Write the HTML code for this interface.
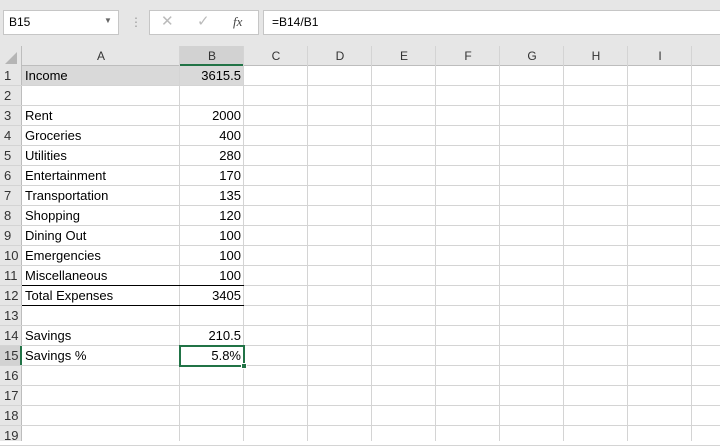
<!DOCTYPE html><html><head><style>
body{margin:0;width:720px;height:441px;overflow:hidden;background:#fff;font-family:"Liberation Sans",sans-serif;font-size:13px;color:#000;position:relative}
.a{position:absolute;box-sizing:border-box}
.t{position:absolute;line-height:20px;white-space:nowrap}
</style></head><body>
<div class="a" style="left:0;top:0;width:720px;height:46px;background:#e6e6e6"></div>
<div class="a" style="left:3px;top:10px;width:116px;height:25px;background:#fff;border:1px solid #c6c6c6"></div>
<div class="t" style="left:9px;top:12px;font-size:12px">B15</div>
<div class="t" style="left:104px;top:11px;font-size:8px;color:#666">▼</div>
<div class="t" style="left:130px;top:12px;color:#999;font-size:12px">⋮</div>
<div class="a" style="left:149px;top:10px;width:110px;height:25px;background:#fff;border:1px solid #c6c6c6"></div>
<div class="t" style="left:161px;top:12px;color:#bbb;font-size:15px">✕</div>
<div class="t" style="left:197px;top:12px;color:#bbb;font-size:15px">✓</div>
<div class="t" style="left:233px;top:12px;font-family:'Liberation Serif',serif;font-style:italic;color:#444">fx</div>
<div class="a" style="left:263px;top:10px;width:460px;height:25px;background:#fff;border:1px solid #c6c6c6"></div>
<div class="t" style="left:272px;top:12px;font-size:12px">=B14/B1</div>
<!-- headers -->
<div class="a" style="left:0;top:46px;width:720px;height:20px;background:#e6e6e6;border-bottom:1px solid #bdbdbd"></div>
<div class="a" style="left:0;top:46px;width:22px;height:395px;background:#e6e6e6;border-right:1px solid #bdbdbd"></div>
<div class="a" style="left:5px;top:52px;width:0;height:0;border-left:12px solid transparent;border-bottom:12px solid #b5b5b5"></div>
<div class="a" style="left:180px;top:46px;width:64px;height:20px;background:#d2d2d2;border-bottom:2px solid #217346"></div>
<div class="a" style="left:0;top:346px;width:22px;height:20px;background:#d2d2d2;border-right:2px solid #217346"></div>
<div class="a" style="left:22px;top:66px;width:222px;height:20px;background:#d9d9d9"></div>
<div id="g"></div>
<div class="a" style="left:22px;top:285px;width:222px;height:1px;background:#000"></div>
<div class="a" style="left:22px;top:305px;width:222px;height:1px;background:#000"></div>
<div class="a" style="left:179px;top:345px;width:66px;height:22px;border:2px solid #217346"></div>
<div class="a" style="left:241px;top:363px;width:6px;height:6px;background:#217346;border:1px solid #fff"></div>
<script>
var g="",cols=[["A",22,180],["B",180,244],["C",244,308],["D",308,372],["E",372,436],["F",436,500],["G",500,564],["H",564,628],["I",628,692],["",692,756]];
cols.forEach(function(c){g+='<div class="a" style="left:'+(c[2]-1)+'px;top:46px;width:1px;height:395px;background:#d4d4d4"></div>';g+='<div class="t" style="left:'+c[1]+'px;width:'+(c[2]-c[1])+'px;top:46px;text-align:center;font-size:12px;color:#333">'+c[0]+'</div>';});
var L=["Income","","Rent","Groceries","Utilities","Entertainment","Transportation","Shopping","Dining Out","Emergencies","Miscellaneous","Total Expenses","","Savings","Savings %"];
var V=["3615.5","","2000","400","280","170","135","120","100","100","100","3405","","210.5","5.8%"];
for(var r=1;r<=19;r++){var y=66+(r-1)*20;
g+='<div class="a" style="left:0;top:'+(y+19)+'px;width:720px;height:1px;background:#d4d4d4"></div>';
g+='<div class="t" style="left:4px;top:'+y+'px;color:#333">'+r+'</div>';
if(L[r-1])g+='<div class="t" style="left:25px;top:'+y+'px">'+L[r-1]+'</div>';
if(V[r-1])g+='<div class="t" style="left:180px;width:61px;text-align:right;top:'+y+'px">'+V[r-1]+'</div>';}
document.getElementById("g").innerHTML=g;
</script>
</body></html>
